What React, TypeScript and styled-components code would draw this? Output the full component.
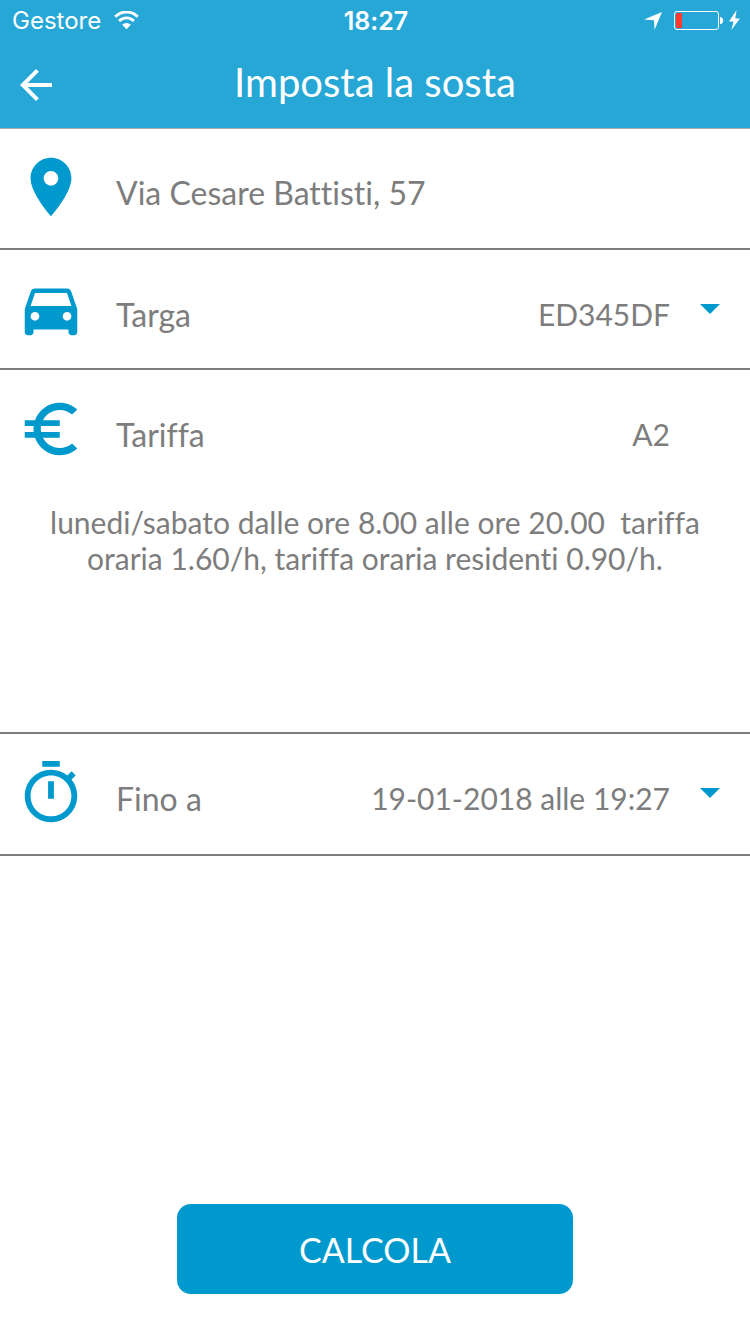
import React from "react";
import styled, { createGlobalStyle } from "styled-components";

const BLUE = "#0099ce";
const HEADER_BLUE = "#26a7d6";
const GREY = "#7d7d7d";

const GlobalStyle = createGlobalStyle`
  *, *::before, *::after { box-sizing: border-box; }
  body {
    margin: 0;
    background: #fff;
    color: ${GREY};
    font-family: Lato, "Open Sans", sans-serif;
    font-variant-ligatures: none;
  }
`;

const Page = styled.div`
  display: flex;
  flex-direction: column;
  min-height: 100vh;
`;

const Header = styled.header`
  background: ${HEADER_BLUE};
  color: #fff;
  box-shadow: 0 1px 0 #a9a9a9;
`;

const StatusBar = styled.div`
  display: grid;
  grid-template-columns: 1fr auto 1fr;
  align-items: center;
  height: 42px;
  padding: 0 10px 0 12px;
  font-family: Inter, Roboto, sans-serif;
  font-size: 24px;
  line-height: 42px;
`;

const Carrier = styled.div`
  display: flex;
  align-items: center;
  gap: 13px;
  font-weight: 400;
`;

const Clock = styled.time`
  font-size: 25px;
  font-weight: 600;
`;

const StatusIcons = styled.div`
  display: flex;
  align-items: center;
  justify-content: flex-end;
`;

const NavBar = styled.div`
  display: grid;
  grid-template-columns: 1fr auto 1fr;
  align-items: center;
  height: 86px;
  padding: 0 12px;
`;

const BackButton = styled.button`
  width: 48px;
  height: 48px;
  padding: 0;
  border: 0;
  background: none;
  color: inherit;
  cursor: pointer;
`;

const Title = styled.h1`
  margin: 0 0 6px;
  font-size: 40px;
  font-weight: 400;
  line-height: 48px;
`;

const Row = styled.section<{ $tall?: boolean }>`
  padding: 24px 0 ${(p) => (p.$tall ? 26 : 24)}px;
  border-bottom: 2px solid ${GREY};
`;

const RowHead = styled.div`
  display: flex;
  align-items: flex-start;
  padding: 0 16px;
`;

const RowIcon = styled.svg`
  flex: none;
  display: block;
  width: 70px;
  height: 70px;
  margin-right: 30px;
  fill: ${BLUE};
`;

const Label = styled.label`
  padding-top: 21px;
  font-size: 32px;
  line-height: 40px;
  white-space: nowrap;
`;

const Text = styled(Label).attrs({ as: "span" })``;

const Value = styled.output`
  flex: 1;
  padding: 20px 64px 0 16px;
  font-size: 30px;
  line-height: 40px;
  text-align: right;
`;

const Picker = styled.div`
  flex: 1;
  position: relative;
  min-width: 0;
`;

const Select = styled.select`
  display: block;
  width: 100%;
  padding: 20px 64px 0 16px;
  border: 0;
  background: none;
  appearance: none;
  color: inherit;
  font: inherit;
  font-size: 30px;
  line-height: 40px;
  text-align-last: right;
`;

const Caret = styled.svg`
  position: absolute;
  right: 0;
  top: 10px;
  width: 48px;
  height: 48px;
  fill: ${BLUE};
  pointer-events: none;
`;

const Description = styled.p`
  min-height: 202px;
  margin: 40px 0 0;
  padding: 0 48px;
  font-size: 30px;
  line-height: 36px;
  text-align: center;
`;

const Footer = styled.footer`
  display: flex;
  justify-content: center;
  margin-top: auto;
  padding: 40px 24px;
`;

const SubmitButton = styled.button`
  width: 100%;
  max-width: 396px;
  padding: 25px 24px 23px;
  border: 0;
  border-radius: 14px;
  background: ${BLUE};
  color: #fff;
  font: inherit;
  font-size: 34px;
  line-height: 42px;
  cursor: pointer;
`;

const icons = {
  pin: "M12 2C8.13 2 5 5.13 5 9c0 5.25 7 13 7 13s7-7.75 7-13c0-3.87-3.13-7-7-7zm0 9.5c-1.38 0-2.5-1.12-2.5-2.5s1.12-2.5 2.5-2.5 2.5 1.12 2.5 2.5-1.12 2.5-2.5 2.5z",
  car: "M18.92 6.01C18.72 5.42 18.16 5 17.5 5h-11c-.66 0-1.21.42-1.42 1.01L3 12v8c0 .55.45 1 1 1h1c.55 0 1-.45 1-1v-1h12v1c0 .55.45 1 1 1h1c.55 0 1-.45 1-1v-8l-2.08-5.99zM6.5 16c-.83 0-1.5-.67-1.5-1.5S5.67 13 6.5 13s1.5.67 1.5 1.5S7.33 16 6.5 16zm11 0c-.83 0-1.5-.67-1.5-1.5s.67-1.5 1.5-1.5 1.5.67 1.5 1.5-.67 1.5-1.5 1.5zM5 11l1.5-4.5h11L19 11H5z",
  euro: "M15 18.5c-2.51 0-4.68-1.42-5.76-3.5H15v-2H8.58c-.05-.33-.08-.66-.08-1s.03-.67.08-1H15V9H9.24C10.32 6.92 12.5 5.5 15 5.5c1.61 0 3.09.59 4.23 1.57L21 5.3C19.41 3.87 17.3 3 15 3c-3.92 0-7.24 2.51-8.48 6H3v2h3.06c-.04.33-.06.66-.06 1s.02.67.06 1H3v2h3.52c1.24 3.49 4.56 6 8.48 6 2.31 0 4.41-.87 6-2.3l-1.78-1.77c-1.13.98-2.6 1.57-4.22 1.57z",
  timer: "M15 1H9v2h6V1zm-4 13h2V8h-2v6zm8.03-6.61l1.42-1.42c-.43-.51-.9-.99-1.41-1.41l-1.42 1.42C16.07 4.74 14.12 4 12 4c-4.97 0-9 4.03-9 9s4.02 9 9 9 9-4.03 9-9c0-2.12-.74-4.07-1.97-5.61zM12 20c-3.87 0-7-3.13-7-7s3.13-7 7-7 7 3.13 7 7-3.13 7-7 7z",
};

const Icon = ({ name }: { name: keyof typeof icons }) => (
  <RowIcon viewBox="0 0 24 24" aria-hidden="true">
    <path d={icons[name]} />
  </RowIcon>
);

const Dropdown = ({ id, value }: { id: string; value: string }) => (
  <Picker>
    <Select id={id} defaultValue={value}>
      <option value={value}>{value}</option>
    </Select>
    <Caret viewBox="0 0 24 24" aria-hidden="true">
      <path d="M7 10l5 5 5-5z" />
    </Caret>
  </Picker>
);

export default function App() {
  return (
    <>
      <GlobalStyle />
      <Page>
        <Header>
          <StatusBar>
            <Carrier>
              Gestore
              <svg width="25" height="20" viewBox="0 0 25 20" fill="none" stroke="#fff" aria-hidden="true">
                <path d="M1.2 5.700a16 16 0 0 1 22.6 0" strokeWidth="3" />
                <path d="M5.1 9.900a10.4 10.4 0 0 1 14.8 0" strokeWidth="2.8" />
                <path d="M12.5 18.2L8.2 13.800a6.1 6.1 0 0 1 8.6 0z" fill="#fff" stroke="none" />
              </svg>
            </Carrier>
            <Clock>18:27</Clock>
            <StatusIcons>
              <svg width="96" height="22" viewBox="0 0 96 22" aria-hidden="true">
                <path d="M18 2L10.6 19.8 10 10.2 0 9.6z" fill="#fff" />
                <rect x="30.5" y="1.5" width="44" height="18" rx="2.5" fill="none" stroke="#fff" />
                <path d="M33 3h5v15h-5q-1 0-1-1V4q0-1 1-1z" fill="#ff3b30" />
                <path d="M76 7h1q2.2 1 2.2 3.5T77 14h-1z" fill="#fff" />
                <path d="M92.6 0L85 11.4h4.6L87.3 20 96 8.4h-4.7z" fill="#fff" />
              </svg>
            </StatusIcons>
          </StatusBar>
          <NavBar>
            <BackButton type="button" aria-label="Indietro">
              <svg width="48" height="48" viewBox="0 0 24 24" fill="currentColor" aria-hidden="true">
                <path d="M20 11H7.83l5.59-5.59L12 4l-8 8 8 8 1.41-1.41L7.83 13H20v-2z" />
              </svg>
            </BackButton>
            <Title>Imposta la sosta</Title>
          </NavBar>
        </Header>

        <main>
          <Row $tall>
            <RowHead>
              <Icon name="pin" />
              <Text>Via Cesare Battisti, 57</Text>
            </RowHead>
          </Row>
          <Row>
            <RowHead>
              <Icon name="car" />
              <Label htmlFor="targa">Targa</Label>
              <Dropdown id="targa" value="ED345DF" />
            </RowHead>
          </Row>
          <Row $tall>
            <RowHead>
              <Icon name="euro" />
              <Label htmlFor="tariffa">Tariffa</Label>
              <Value id="tariffa">A2</Value>
            </RowHead>
            <Description>
              lunedi/sabato dalle ore 8.00 alle ore 20.00&nbsp; tariffa oraria 1.60/h, tariffa oraria residenti
              0.90/h.
            </Description>
          </Row>
          <Row $tall>
            <RowHead>
              <Icon name="timer" />
              <Label htmlFor="fino">Fino a</Label>
              <Dropdown id="fino" value="19-01-2018 alle 19:27" />
            </RowHead>
          </Row>
        </main>

        <Footer>
          <SubmitButton type="button">CALCOLA</SubmitButton>
        </Footer>
      </Page>
    </>
  );
}
